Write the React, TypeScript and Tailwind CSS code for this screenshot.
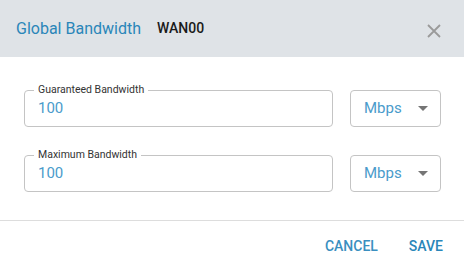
import React from 'react';

interface FieldProps {
  label: string;
  value: string;
}

const OutlinedField: React.FC<FieldProps> = ({ label, value }) => (
  <div className="relative flex-1 h-[37px] border border-[#c4c4c4] rounded-[4px] flex items-center pl-[13px]">
    <span className="absolute -top-[8px] left-[9px] bg-white px-[4px] text-[10.5px] leading-[14px] text-[#333333]">
      {label}
    </span>
    <span className="text-[15px] text-[#4a9bcb]">{value}</span>
  </div>
);

const UnitSelect: React.FC<{ value: string }> = ({ value }) => (
  <div className="w-[91px] h-[37px] border border-[#c4c4c4] rounded-[4px] flex items-center justify-between pl-[13px] pr-[12px]">
    <span className="text-[15px] text-[#4a9bcb]">{value}</span>
    <svg width="10" height="5" viewBox="0 0 10 5">
      <path d="M0 0 L10 0 L5 5 Z" fill="#757575" />
    </svg>
  </div>
);

export default function App() {
  return (
    <div
      className="w-[464px] h-[271px] bg-white flex flex-col"
      style={{ fontFamily: 'Roboto, "Liberation Sans", sans-serif' }}
    >
      <div className="h-[57px] bg-[#dfe3e7] flex items-center pl-[16px] pr-[22px] shrink-0">
        <span className="text-[16px] text-[#2a86b9]">Global Bandwidth</span>
        <span className="ml-[16px] text-[14px] font-medium text-[#1a1a1a]">WAN00</span>
        <button className="ml-auto mt-[4px] w-[16px] h-[16px] flex items-center justify-center">
          <svg width="14" height="14" viewBox="0 0 14 14">
            <path d="M1 1 L13 13 M13 1 L1 13" stroke="#9a9a9a" strokeWidth="1.8" />
          </svg>
        </button>
      </div>

      <div className="flex flex-col gap-[28px] pl-[24px] pr-[23px] pt-[33px] pb-[28px] border-b border-[#dddddd]">
        <div className="flex gap-[17px]">
          <OutlinedField label="Guaranteed Bandwidth" value="100" />
          <UnitSelect value="Mbps" />
        </div>
        <div className="flex gap-[17px]">
          <OutlinedField label="Maximum Bandwidth" value="100" />
          <UnitSelect value="Mbps" />
        </div>
      </div>

      <div className="flex-1 flex items-center justify-end pr-[13px] gap-[15px]">
        <button className="px-[8px] py-[6px] text-[14px] font-medium text-[#3a8fc0]">CANCEL</button>
        <button className="px-[8px] py-[6px] text-[14px] font-medium text-[#2a86b9]">SAVE</button>
      </div>
    </div>
  );
}
